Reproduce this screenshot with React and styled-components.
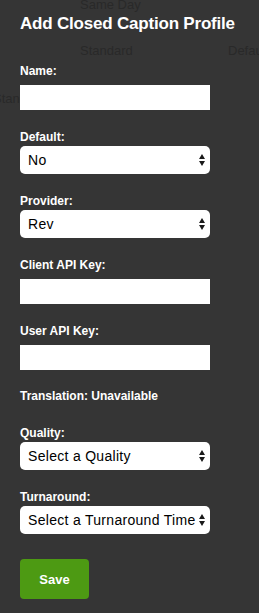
import styled, { createGlobalStyle } from "styled-components";

const GlobalStyle = createGlobalStyle`
  html, body {
    margin: 0;
    padding: 0;
    background-color: #353535;
    font-family: "Liberation Sans", Arial, sans-serif;
  }
  * {
    box-sizing: border-box;
  }
`;

const Pagina = styled.div`
  position: relative;
  width: 259px;
  height: 613px;
  overflow: hidden;
`;

// tabela que fica por tras do modal
const Fundo = styled.div`
  position: absolute;
  inset: 0;
  z-index: 0;
`;

const TextoFundo = styled.span`
  position: absolute;
  left: ${({ $x }) => $x}px;
  top: ${({ $y }) => $y}px;
  font-size: 13px;
  line-height: 15px;
  color: #292929;
  white-space: nowrap;
`;

const Modal = styled.form`
  position: relative;
  z-index: 1;
  padding: 14px 20px 0;
  color: #ffffff;
`;

const Titulo = styled.h2`
  margin: 0 0 30px;
  font-size: 17px;
  line-height: 20px;
  font-weight: bold;
  letter-spacing: -0.2px;
  white-space: nowrap;
`;

const Campo = styled.div`
  display: flex;
  flex-direction: column;
  gap: ${({ $select }) => ($select ? "2px" : "7px")};
  margin-bottom: 20px;
`;

const Rotulo = styled.label`
  font-size: 12px;
  line-height: 14px;
  font-weight: bold;
`;

const Entrada = styled.input`
  width: 190px;
  height: 25px;
  border: none;
  border-radius: 0;
  background-color: #ffffff;
  padding: 0 6px;
  font-size: 14px;
  font-family: inherit;
  outline: none;
`;

const SelectCaixa = styled.div`
  position: relative;
  width: 190px;
  height: 28px;
`;

const Selecao = styled.select`
  appearance: none;
  -webkit-appearance: none;
  width: 100%;
  height: 100%;
  border: none;
  border-radius: 5px;
  background-color: #ffffff;
  color: #000000;
  padding: 0 12px 0 8px;
  font-family: inherit;
  font-size: 14px;
  letter-spacing: 0.3px;
  outline: none;
`;

const Seta = styled.svg`
  position: absolute;
  right: 4px;
  top: 7px;
  pointer-events: none;
  background-color: #ffffff;
`;

const Traducao = styled.p`
  margin: -1px 0 23px;
  font-size: 12px;
  line-height: 14px;
  font-weight: bold;
`;

const BotaoSalvar = styled.button`
  margin-top: 5px;
  width: 69px;
  height: 40px;
  border: none;
  border-radius: 4px;
  background-color: #4d9a13;
  color: #ffffff;
  font-family: inherit;
  font-size: 13px;
  font-weight: bold;
  cursor: pointer;
`;

function CampoTexto({ id, rotulo }) {
  return (
    <Campo>
      <Rotulo htmlFor={id}>{rotulo}</Rotulo>
      <Entrada id={id} type="text" />
    </Campo>
  );
}

function CampoSelect({ id, rotulo, opcoes }) {
  return (
    <Campo $select>
      <Rotulo htmlFor={id}>{rotulo}</Rotulo>
      <SelectCaixa>
        <Selecao id={id}>
          {opcoes.map((op) => (
            <option key={op}>{op}</option>
          ))}
        </Selecao>
        <Seta width="8" height="14" viewBox="0 0 8 14">
          <path d="M4 1 L7 6 L1 6 Z" fill="#1a1a1a" />
          <path d="M4 13 L7 8 L1 8 Z" fill="#1a1a1a" />
        </Seta>
      </SelectCaixa>
    </Campo>
  );
}

export default function App() {
  return (
    <>
      <GlobalStyle />
      <Pagina>
        <Fundo>
          <TextoFundo $x={80} $y={-3}>Same Day</TextoFundo>
          <TextoFundo $x={80} $y={43}>Standard</TextoFundo>
          <TextoFundo $x={228} $y={43}>Default</TextoFundo>
          <TextoFundo $x={-7} $y={91}>Standard</TextoFundo>
        </Fundo>
        <Modal onSubmit={(e) => e.preventDefault()}>
          <Titulo>Add Closed Caption Profile</Titulo>
          <CampoTexto id="nome" rotulo="Name:" />
          <CampoSelect id="padrao" rotulo="Default:" opcoes={["No", "Yes"]} />
          <CampoSelect id="provedor" rotulo="Provider:" opcoes={["Rev"]} />
          <CampoTexto id="cliente" rotulo="Client API Key:" />
          <CampoTexto id="usuario" rotulo="User API Key:" />
          <Traducao>Translation: Unavailable</Traducao>
          <CampoSelect
            id="qualidade"
            rotulo="Quality:"
            opcoes={["Select a Quality"]}
          />
          <CampoSelect
            id="prazo"
            rotulo="Turnaround:"
            opcoes={["Select a Turnaround Time"]}
          />
          <BotaoSalvar type="submit">Save</BotaoSalvar>
        </Modal>
      </Pagina>
    </>
  );
}
